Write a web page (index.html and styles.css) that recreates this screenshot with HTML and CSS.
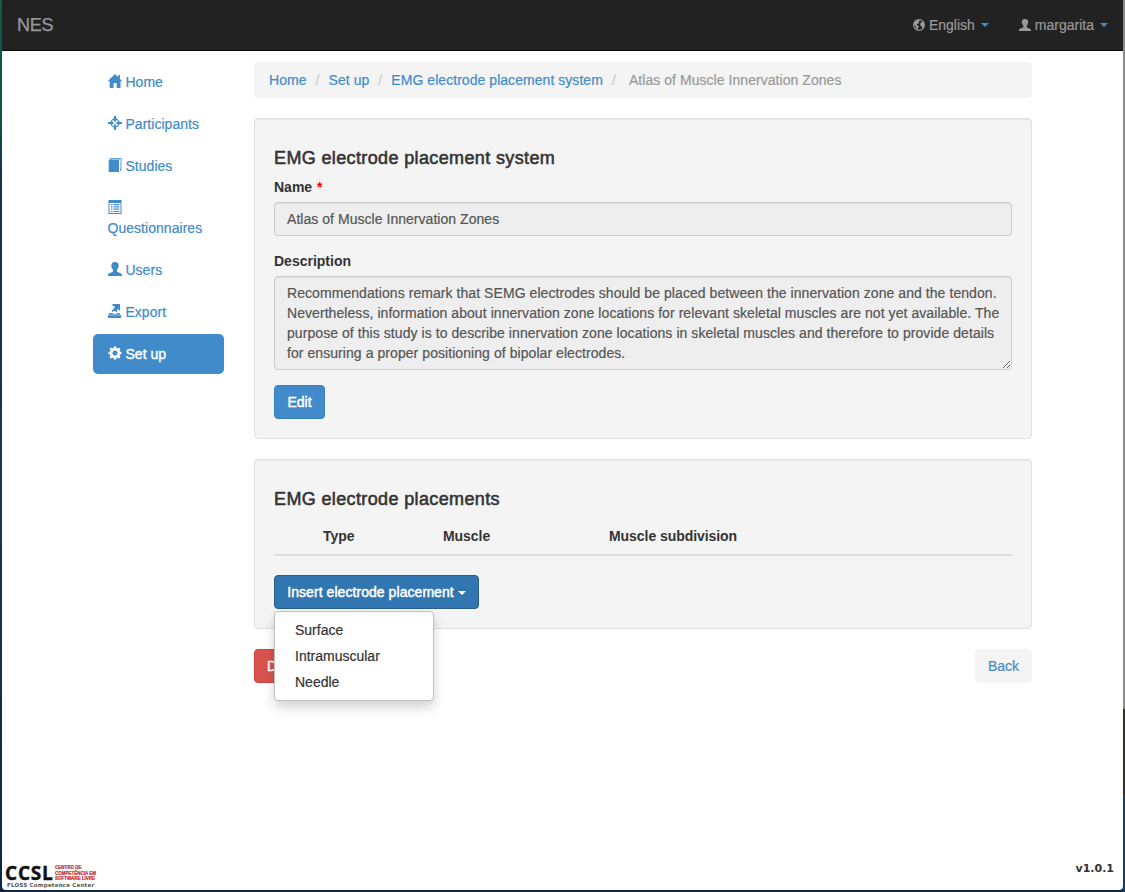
FILE: index.html
```html
<!DOCTYPE html>
<html lang="en">
<head>
<meta charset="utf-8">
<title>NES</title>
<link rel="stylesheet" href="styles.css">
</head>
<body>
<svg width="0" height="0" class="defs">
  <symbol id="user" viewBox="0 0 14 14"><path d="M7 0C4.300 0 3.300 1.500 3.400 3.600 3 3.800 3.200 5 3.700 5.300 3.900 6.600 4.500 7.300 5 7.700V9.500C4.500 10.600 0 10.600 0 13V14H14V13C14 10.600 9.500 10.600 9 9.500V7.700C9.500 7.300 10.100 6.600 10.300 5.300 10.800 5 11 3.800 10.600 3.600 10.800 1.500 9.700 0 7 0Z"/></symbol>
</svg>
<div class="desktop">
<div class="window">
  <header class="navbar">
    <a class="brand">NES</a>
    <div class="menus">
      <a class="menu"><svg class="icon globe" viewBox="0 0 14 14"><circle cx="7" cy="7" r="6.300" fill="none" stroke="currentColor" stroke-width="1.300"/><path d="M1 4.500 3.500 1.500 7 .8 8 2 6.700 3.300 7.400 4.300 5.800 5.400 4.300 6.100 4.800 7.400 6.800 8.200 6.600 9.800 5.500 11 5 13 3.600 11.600 3.300 9 1.300 7ZM9 4.300 11.500 3 13.300 6 12.700 9.800 10.800 11.700 10.300 8.800 8.600 7.600 8.300 5.600Z"/></svg><span>English</span><i class="caret"></i></a>
      <a class="menu"><svg class="icon small"><use href="#user"/></svg><span>margarita</span><i class="caret"></i></a>
    </div>
  </header>
  <div class="container">
    <nav class="side">
      <a><svg class="icon" viewBox="0 0 14 14"><path d="M7 0 10 3V1.300H12V5L14.300 7.300H12.500V14H8.700V9H5.500V14H1.700V7.300H-.3Z"/></svg> Home</a>
      <a><svg class="icon" viewBox="0 0 14 14"><circle cx="7" cy="7" r="4" fill="none" stroke="currentColor" stroke-width="1.300"/><path d="M6 0H8V5L7 6 6 5ZM6 14H8V9L7 8 6 9ZM0 6H5L6 7 5 8H0ZM14 6H9L8 7 9 8H14Z"/></svg> Participants</a>
      <a><svg class="icon" viewBox="0 0 14 14"><path d="M.7 2.400 2.800 0H13.500V11.500L12 13.500V2H11V14H.7Z"/><path d="M3 1.200H12.700V11" fill="none" stroke="#fff" stroke-width=".7"/></svg> Studies</a>
      <a><svg class="icon" viewBox="0 0 14 14"><path fill-rule="evenodd" d="M.5 0H13.500V14H.5ZM1.500 3V13H12.500V3Z"/><path d="M3 4H4.500V5.200H3ZM3 6.300H4.500V7.500H3ZM3 8.600H4.500V9.800H3ZM3 10.900H4.500V12.100H3ZM5.500 4H11.300V5.200H5.500ZM5.500 6.300H11.300V7.500H5.500ZM5.500 8.600H11.300V9.800H5.500ZM5.500 10.900H11.300V12.100H5.500Z"/></svg> Questionnaires</a>
      <a><svg class="icon"><use href="#user"/></svg> Users</a>
      <a><svg class="icon" viewBox="0 0 14 14"><path d="M4.500 0H12V7L9.800 5 8.800 6.500 9.700 7.500 8 8 6.500 6.500 4.500 8 3.500 7 5.800 4.500 7 3 4.500 1.500ZM1.500 9H4.500L5.500 10H8L9 9H11.500L12.700 10.700H.3ZM0 11.200H13V14H0Z"/></svg> Export</a>
      <a class="active"><svg class="icon" viewBox="0 0 14 14"><path fill-rule="evenodd" d="M5.900 .5H8.100L8.500 2.200 9.500 2.600 11 1.600 12.500 3.100 11.500 4.600 11.900 5.600 13.500 5.900V8.100L11.900 8.500 11.500 9.500 12.500 11 11 12.500 9.500 11.500 8.500 11.900 8.100 13.500H5.900L5.500 11.900 4.500 11.500 3 12.500 1.500 11 2.500 9.500 2.100 8.500 .5 8.100V5.900L2.100 5.500 2.500 4.500 1.500 3 3 1.500 4.500 2.500 5.500 2.100ZM7 4.500A2.500 2.500 0 1 0 7 9.500 2.500 2.500 0 1 0 7 4.500Z"/></svg> Set up</a>
    </nav>
    <main class="main">
      <div class="breadcrumb"><a>Home</a><b>/</b><a>Set up</a><b>/</b><a>EMG electrode placement system</a><b>/</b><span class="current">Atlas of Muscle Innervation Zones</span></div>
      <section class="well">
        <h4>EMG electrode placement system</h4>
        <label for="name">Name <span class="required">*</span></label>
        <input id="name" class="control" disabled value="Atlas of Muscle Innervation Zones">
        <label for="description">Description</label>
        <textarea id="description" class="control" disabled>Recommendations remark that SEMG electrodes should be placed between the innervation zone and the tendon.
Nevertheless, information about innervation zone locations for relevant skeletal muscles are not yet available. The
purpose of this study is to describe innervation zone locations in skeletal muscles and therefore to provide details
for ensuring a proper positioning of bipolar electrodes.</textarea>
        <button class="btn primary">Edit</button>
      </section>
      <section class="well">
        <h4 class="second">EMG electrode placements</h4>
        <div class="thead"><span>Type</span><span>Muscle</span><span>Muscle subdivision</span></div>
        <div class="dropdown">
          <button class="btn primary open">Insert electrode placement<i class="caret"></i></button>
          <div class="dropdown-menu"><a>Surface</a><a>Intramuscular</a><a>Needle</a></div>
        </div>
      </section>
      <div class="actions"><button class="btn danger">Delete</button><button class="btn back">Back</button></div>
    </main>
  </div>
  <footer class="footer">
    <div class="logo">
      <div class="logo-top"><span class="ccsl">CCSL</span><span class="centro">CENTRO DE<br>COMPETÊNCIA EM<br>SOFTWARE LIVRE</span></div>
      <div class="floss">FLOSS Competence Center</div>
    </div>
    <span class="version">v1.0.1</span>
  </footer>
</div>
</div>
</body>
</html>
```
FILE: styles.css
```css
* { box-sizing: border-box; }
body {
  margin: 0;
  font: 14px/20px "Liberation Sans", Arial, sans-serif;
  color: #333;
}
.defs { display: block; position: absolute; }
.desktop {
  height: 892px;
  padding: 0 2px 2px;
  background:
    linear-gradient(#8a8a8a 0 709px, #2b2b29 709px 795px, #173e60 795px) right / 2px 100% no-repeat,
    linear-gradient(#145a46, #10504a 130px, #14304c 180px, #163654 500px, #0d2745 892px);
}
.window {
  height: 890px;
  display: flex;
  flex-direction: column;
  background: #fff;
  border-radius: 0 0 4px 4px;
  overflow: hidden;
}
.navbar {
  height: 51px;
  flex: none;
  display: flex;
  justify-content: space-between;
  padding: 15px 15px 0;
  background: #222;
  border-bottom: 1px solid #080808;
  color: #999;
}
.brand { font-size: 18px; letter-spacing: -.3px; -webkit-text-stroke: .25px; }
.menus { display: flex; gap: 30px; }
.menu {
  display: flex;
  align-items: center;
  height: 20px;
  -webkit-text-stroke: .2px;
}
.menu .icon { margin: 0 4px 0 0; }
.menu .globe, .menu .small { width: 12px; height: 12px; }
.menu .caret { margin-left: 6px; color: #428bca; }
.icon {
  width: 14px;
  height: 14px;
  fill: currentColor;
  vertical-align: -1px;
  overflow: visible;
}
.caret {
  display: inline-block;
  border: 4px solid transparent;
  border-top-color: currentColor;
  border-bottom: 0;
}
.container { display: flex; gap: 30px; padding: 11px 91px 0; flex: 1; }
.side { width: 131px; display: flex; flex-direction: column; gap: 2px; }
.side a {
  padding: 10px 14px 10px 14.500px;
  border-radius: 5px;
  color: #428bca;
  letter-spacing: .04px;
  -webkit-text-stroke: .2px;
}
.side svg { -webkit-text-stroke: 0; }
.side .active {
  background: #428bca;
  color: #fff;
  -webkit-text-stroke: .4px;
}
.main { width: 778px; }
.breadcrumb {
  height: 36px;
  margin-bottom: 20px;
  padding: 8px 15px;
  display: flex;
  background: #f4f4f4;
  border-radius: 4px;
  color: #999;
  letter-spacing: .05px;
  -webkit-text-stroke: .2px;
}
.breadcrumb a { color: #428bca; }
.breadcrumb b { width: 22px; text-align: center; font-weight: normal; color: #ccc; }
.breadcrumb .current { margin-left: 4px; }
.well {
  margin-bottom: 20px;
  padding: 19px;
  background: #f4f4f4;
  border: 1px solid #e1e1e1;
  border-radius: 4px;
  box-shadow: inset 0 1px 1px rgba(0, 0, 0, .05);
}
h4 {
  margin: 10px 0 9px;
  font-size: 18px;
  line-height: 20px;
  font-weight: normal;
  letter-spacing: .37px;
  -webkit-text-stroke: .55px;
}
h4.second { margin-bottom: 8px; }
label { display: block; margin-bottom: 5px; font-weight: bold; }
.required { color: #f00; margin-left: 1px; }
.control {
  display: block;
  width: 100%;
  height: 34px;
  margin: 0 0 15px;
  padding: 6px 12px;
  font: inherit;
  letter-spacing: .04px;
  -webkit-text-stroke: .2px;
  color: #555;
  background: #eee;
  border: 1px solid #ccc;
  border-radius: 4px;
  box-shadow: inset 0 1px 1px rgba(0, 0, 0, .075);
}
textarea.control { height: 94px; white-space: pre; overflow: hidden; letter-spacing: .065px; }
.btn {
  display: inline-block;
  height: 34px;
  padding: 0 12px;
  font: inherit;
  color: #fff;
  border: 1px solid;
  border-radius: 4px;
  -webkit-text-stroke: .45px;
}
.primary { display: block; width: 51px; background: #428bca; border-color: #357ebd; }
.open {
  width: 205px;
  padding: 0;
  background: #3276b1;
  border-color: #285e8e;
  letter-spacing: .06px;
  white-space: nowrap;
}
.open .caret { margin-left: 4px; vertical-align: 2px; }
.danger { background: #d9534f; border-color: #d43f3a; }
.back {
  background: #f4f4f4;
  border-color: #f4f4f4;
  color: #428bca;
  -webkit-text-stroke: .2px;
}
.thead {
  display: grid;
  grid-template-columns: 120px 166px 1fr;
  padding: 9px 0 8px 49px;
  margin-bottom: 19px;
  border-bottom: 2px solid #ddd;
  font-weight: bold;
  letter-spacing: -.06px;
}
.dropdown { position: relative; }
.dropdown-menu {
  position: absolute;
  z-index: 2;
  top: 36px;
  left: 0;
  width: 160px;
  padding: 5px 0;
  background: #fff;
  border: 1px solid #bfbfbf;
  border-radius: 4px;
  box-shadow: 0 6px 12px rgba(0, 0, 0, .175);
  -webkit-text-stroke: .2px;
}
.dropdown-menu a { display: block; padding: 3px 20px; }
.actions { display: flex; justify-content: space-between; }
.footer { display: flex; justify-content: space-between; padding: 0 10px 2px 3px; }
.logo { height: 24px; width: 92px; white-space: nowrap; }
.logo-top { display: flex; height: 18px; }
.ccsl {
  width: 50px;
  font: bold 19px/18px "Open Sans", sans-serif;
  letter-spacing: .8px;
  color: #111;
  -webkit-text-stroke: .4px;
}
.centro {
  padding-top: 1px;
  font: bold 4.500px/5.500px "Liberation Sans", sans-serif;
  color: #c22a35;
  -webkit-text-stroke: .2px;
}
.floss {
  padding-left: 2px;
  font: bold 5.500px/6px "DejaVu Sans", sans-serif;
  letter-spacing: .21px;
  color: #555;
}
.version { font: bold 11px/14px "DejaVu Sans", sans-serif; margin: -2px -1px 0 0; }
```
